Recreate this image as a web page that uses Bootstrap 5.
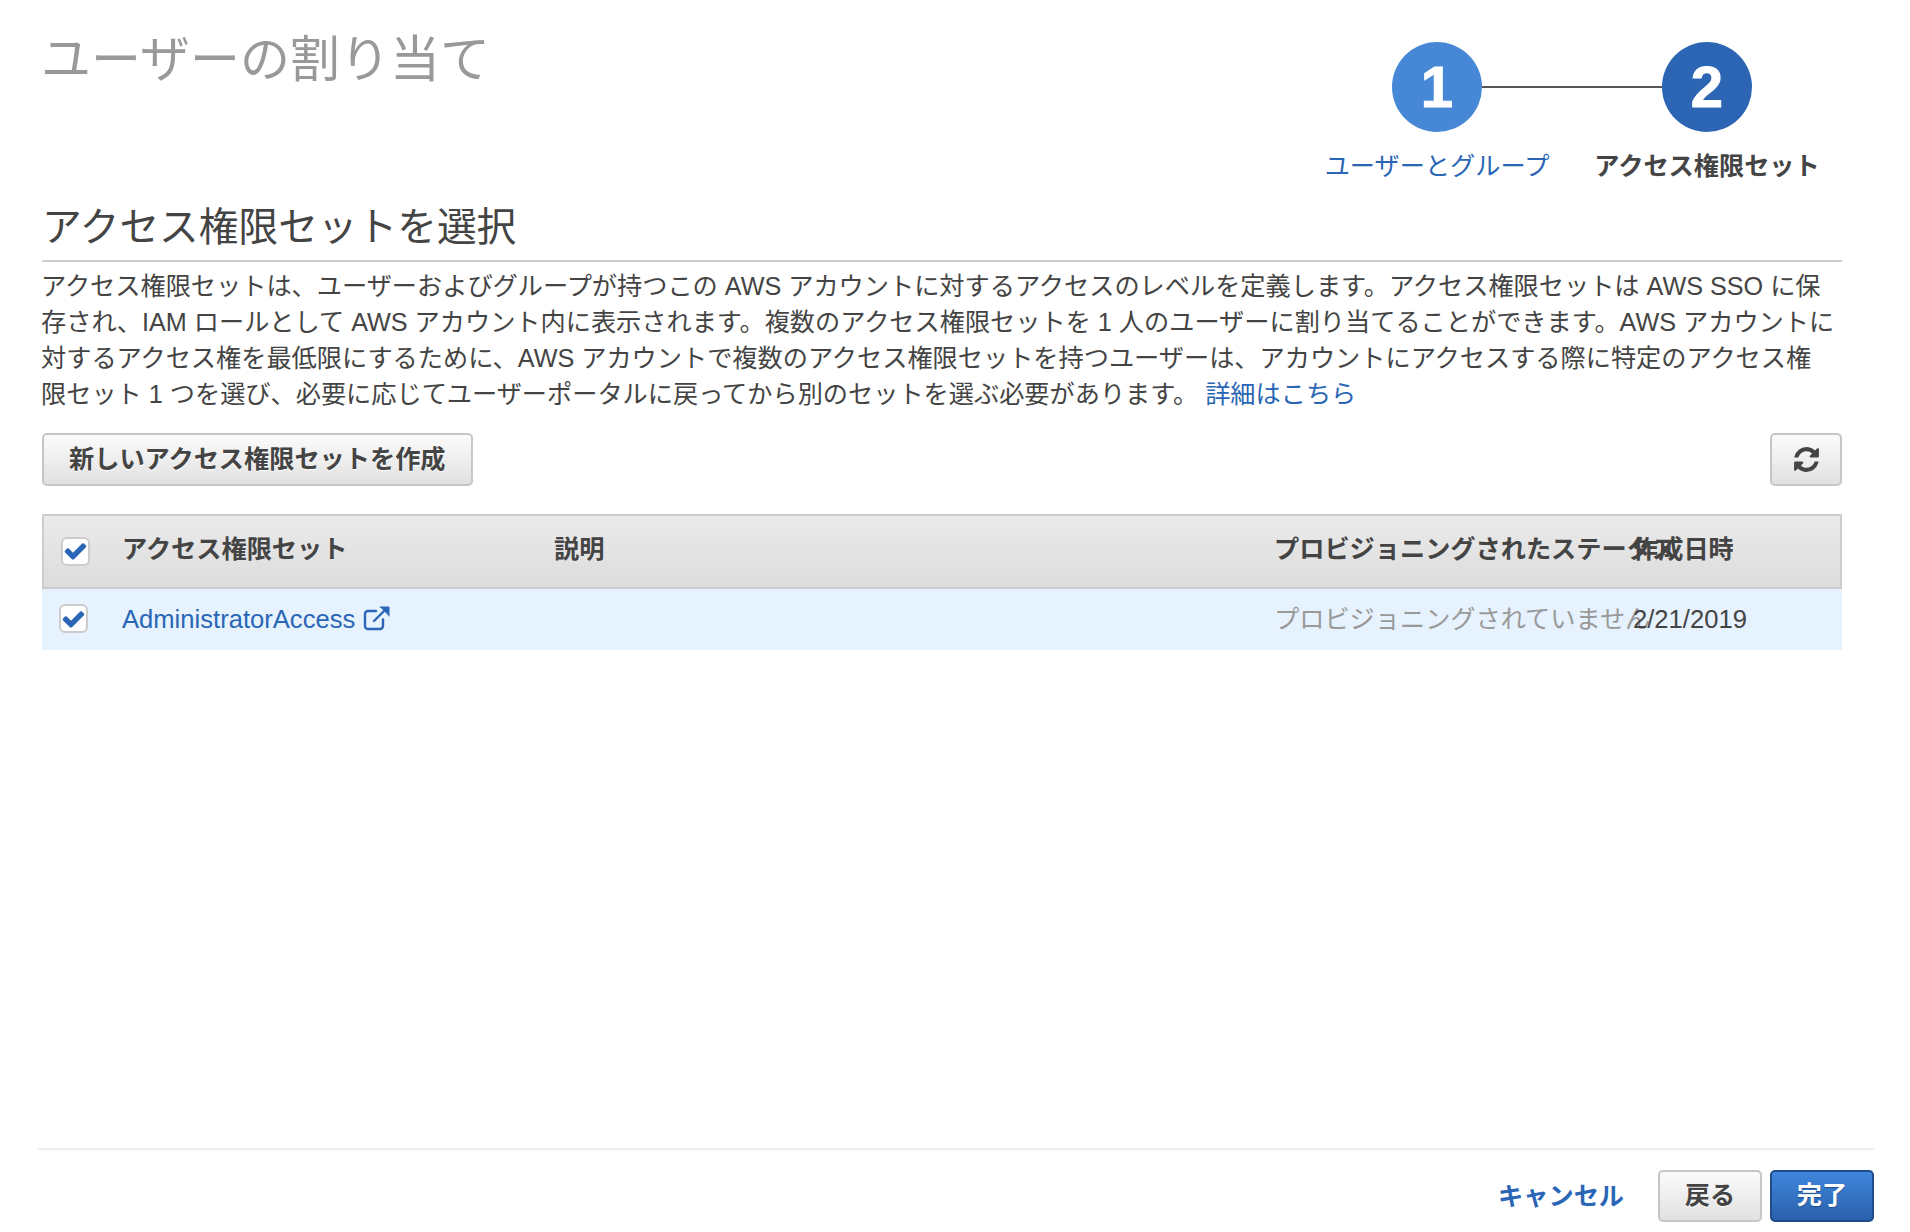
<!DOCTYPE html>
<html lang="ja">
<head>
    <meta charset="UTF-8">
    <title>ユーザーの割り当て</title>
    <link href="https://cdn.jsdelivr.net/npm/bootstrap@5.3.0/dist/css/bootstrap.min.css" rel="stylesheet">
    <style>
        body {
            font-family: "Liberation Sans", "Noto Sans CJK JP", sans-serif;
            font-size: 25.2px;
            line-height: 36px;
            color: #444;
            background: #fff;
        }
        a { color: #2a66b5; text-decoration: none; }
        .page-main { padding: 0 68px 0 42px; }
        .page-title {
            font-size: 50px;
            line-height: 60px;
            font-weight: 400;
            color: #999;
            margin: 30px 0 0 -1px;
        }
        .stepper { width: 540px; padding-top: 42px; }
        .step-dot {
            width: 90px;
            height: 90px;
            border-radius: 50%;
            color: #fff;
            font-size: 58px;
            font-weight: 700;
            line-height: 90px;
            text-align: center;
            -webkit-text-stroke: 1px #fff;
        }
        .step-done { background: #4788d6; }
        .step-now { background: #2b65b4; }
        .step-line { width: 180px; height: 2px; background: #555; }
        .step-label { width: 270px; text-align: center; white-space: nowrap; margin-top: 16px; }
        .section-title {
            font-size: 39.7px;
            line-height: 48px;
            font-weight: 400;
            color: #444;
            border-bottom: 2px solid #ccc;
            margin: 19px 0 6px;
            padding-bottom: 9px;
        }
        .intro-text { margin: 0 0 21px -1px; }
        .aws-btn {
            height: 53px;
            font-size: 25.2px;
            font-weight: 700;
            line-height: 1;
            color: #444;
            padding: 0 25px;
            border: 2px solid #c6c6c6;
            border-radius: 5px;
            background: linear-gradient(#fbfbfb, #e1e1e1);
            text-shadow: 0 1px 1px #fff;
        }
        .aws-btn:hover { color: #444; border-color: #c6c6c6; }
        .aws-icon-btn { width: 72px; padding: 0; }
        .aws-primary {
            color: #fff;
            border-color: #1f4c8a;
            background: linear-gradient(#3f86dc, #2a60ab);
            text-shadow: 0 1px 1px #1f4c8a;
        }
        .aws-primary:hover { color: #fff; border-color: #1f4c8a; }
        .foot-btn { width: 104px; height: 52px; padding: 0; }
        .perm-table {
            table-layout: fixed;
            width: 1800px;
            margin: 28px 0 0;
            border-collapse: separate;
            border-spacing: 0;
        }
        .perm-table th, .perm-table td {
            white-space: nowrap;
            overflow: visible;
            padding: 0;
            vertical-align: middle;
        }
        .perm-table th {
            height: 75px;
            font-weight: 700;
            color: #444;
            padding-bottom: 6px;
            background: linear-gradient(#ebebeb, #dcdcdc);
            border-top: 2px solid #ccc;
            border-bottom: 2px solid #ccc;
        }
        .perm-table th:first-child { border-left: 2px solid #ccc; border-top-left-radius: 2px; }
        .perm-table th:last-child { border-right: 2px solid #ccc; border-top-right-radius: 2px; }
        .perm-table td { height: 61px; padding-bottom: 2px; background: #e6f2fd; }
        .col-check { width: 80px; }
        .col-name { width: 432px; }
        .col-desc { width: 720px; }
        .col-state { width: 359px; }
        .check-box {
            width: 29px;
            height: 29px;
            border: 2px solid #ccc;
            border-radius: 6px;
            background: #fff;
            margin-left: 17px;
        }
        th .check-box { margin-top: 5px; }
        .check-box svg { width: 26px; height: 26px; }
        .muted-state { color: #999; }
        .latin-cell { font-size: 25.6px; }
        .ext-icon { width: 28px; height: 26px; margin-left: 8px; vertical-align: -3px; }
        .page-foot {
            margin: auto 36px 0 38px;
            padding: 20px 0 10px;
            border-top: 2px solid #eee;
        }
        .cancel-link { font-weight: 700; margin-right: 26px; }
    </style>
</head>
<body class="min-vh-100 d-flex flex-column">
<div class="page-main">
    <div class="d-flex justify-content-between">
        <h1 class="page-title">ユーザーの割り当て</h1>
        <div class="stepper">
            <div class="d-flex align-items-center justify-content-center">
                <div class="step-dot step-done">1</div>
                <div class="step-line"></div>
                <div class="step-dot step-now">2</div>
            </div>
            <div class="d-flex">
                <div class="step-label"><a href="#">ユーザーとグループ</a></div>
                <div class="step-label fw-bold">アクセス権限セット</div>
            </div>
        </div>
    </div>

    <h2 class="section-title">アクセス権限セットを選択</h2>
    <p class="intro-text">アクセス権限セットは、ユーザーおよびグループが持つこの AWS アカウントに対するアクセスのレベルを定義します。アクセス権限セットは AWS SSO に保存され、IAM ロールとして AWS アカウント内に表示されます。複数のアクセス権限セットを 1 人のユーザーに割り当てることができます。AWS アカウントに対するアクセス権を最低限にするために、AWS アカウントで複数のアクセス権限セットを持つユーザーは、アカウントにアクセスする際に特定のアクセス権<br>限セット 1 つを選び、必要に応じてユーザーポータルに戻ってから別のセットを選ぶ必要があります。 <a href="#">詳細はこちら</a></p>

    <div class="d-flex justify-content-between">
        <button type="button" class="btn aws-btn">新しいアクセス権限セットを作成</button>
        <button type="button" class="btn aws-btn aws-icon-btn" aria-label="更新">
            <svg width="29" height="29" viewBox="0 0 1792 1792" fill="#444"><path d="M1639 1056q0 5-1 7-64 268-268 434.5t-478 166.5q-146 0-282.5-55t-243.5-157l-129 129q-19 19-45 19t-45-19-19-45v-448q0-26 19-45t45-19h448q26 0 45 19t19 45-19 45l-137 137q71 66 161 102t187 36q134 0 250-65t186-179q11-17 53-117 8-23 30-23h192q13 0 22.5 9.5t9.5 22.5zm25-800v448q0 26-19 45t-45 19h-448q-26 0-45-19t-19-45 19-45l138-138q-148-137-349-137-134 0-250 65t-186 179q-11 17-53 117-8 23-30 23h-199q-13 0-22.5-9.5t-9.5-22.5v-7q65-268 270-434.5t480-166.5q146 0 284 55.5t245 156.5l130-129q19-19 45-19t45 19 19 45z"/></svg>
        </button>
    </div>

    <table class="perm-table">
        <thead>
        <tr>
            <th class="col-check">
                <div class="check-box d-flex align-items-center justify-content-center">
                    <svg viewBox="0 0 1792 1792" fill="#2a66b5"><path d="M1671 566q0 40-28 68l-724 724-136 136q-28 28-68 28t-68-28l-136-136-362-362q-28-28-28-68t28-68l136-136q28-28 68-28t68 28l294 295 656-657q28-28 68-28t68 28l136 136q28 28 28 68z"/></svg>
                </div>
            </th>
            <th class="col-name">アクセス権限セット</th>
            <th class="col-desc">説明</th>
            <th class="col-state">プロビジョニングされたステータス</th>
            <th>作成日時</th>
        </tr>
        </thead>
        <tbody>
        <tr>
            <td>
                <div class="check-box d-flex align-items-center justify-content-center">
                    <svg viewBox="0 0 1792 1792" fill="#2a66b5"><path d="M1671 566q0 40-28 68l-724 724-136 136q-28 28-68 28t-68-28l-136-136-362-362q-28-28-28-68t28-68l136-136q28-28 68-28t68 28l294 295 656-657q28-28 68-28t68 28l136 136q28 28 28 68z"/></svg>
                </div>
            </td>
            <td class="latin-cell">
                <a href="#">AdministratorAccess<svg class="ext-icon" viewBox="0 0 28 26" fill="none" stroke="#2a66b5" stroke-width="2.4" stroke-linecap="round" stroke-linejoin="round"><path d="M20 14.5V21a3 3 0 0 1-3 3H5a3 3 0 0 1-3-3V9a3 3 0 0 1 3-3h8"/><path d="M11 16L24 3"/><path d="M17 2h9v9" fill="#2a66b5" stroke-width="1"/></svg></a>
            </td>
            <td></td>
            <td class="muted-state">プロビジョニングされていません</td>
            <td class="latin-cell">2/21/2019</td>
        </tr>
        </tbody>
    </table>
</div>

<div class="page-foot d-flex justify-content-end align-items-center gap-2">
    <a href="#" class="cancel-link">キャンセル</a>
    <button type="button" class="btn aws-btn foot-btn">戻る</button>
    <button type="button" class="btn aws-btn aws-primary foot-btn">完了</button>
</div>
<script src="https://cdn.jsdelivr.net/npm/bootstrap@5.3.0/dist/js/bootstrap.bundle.min.js"></script>
</body>
</html>
